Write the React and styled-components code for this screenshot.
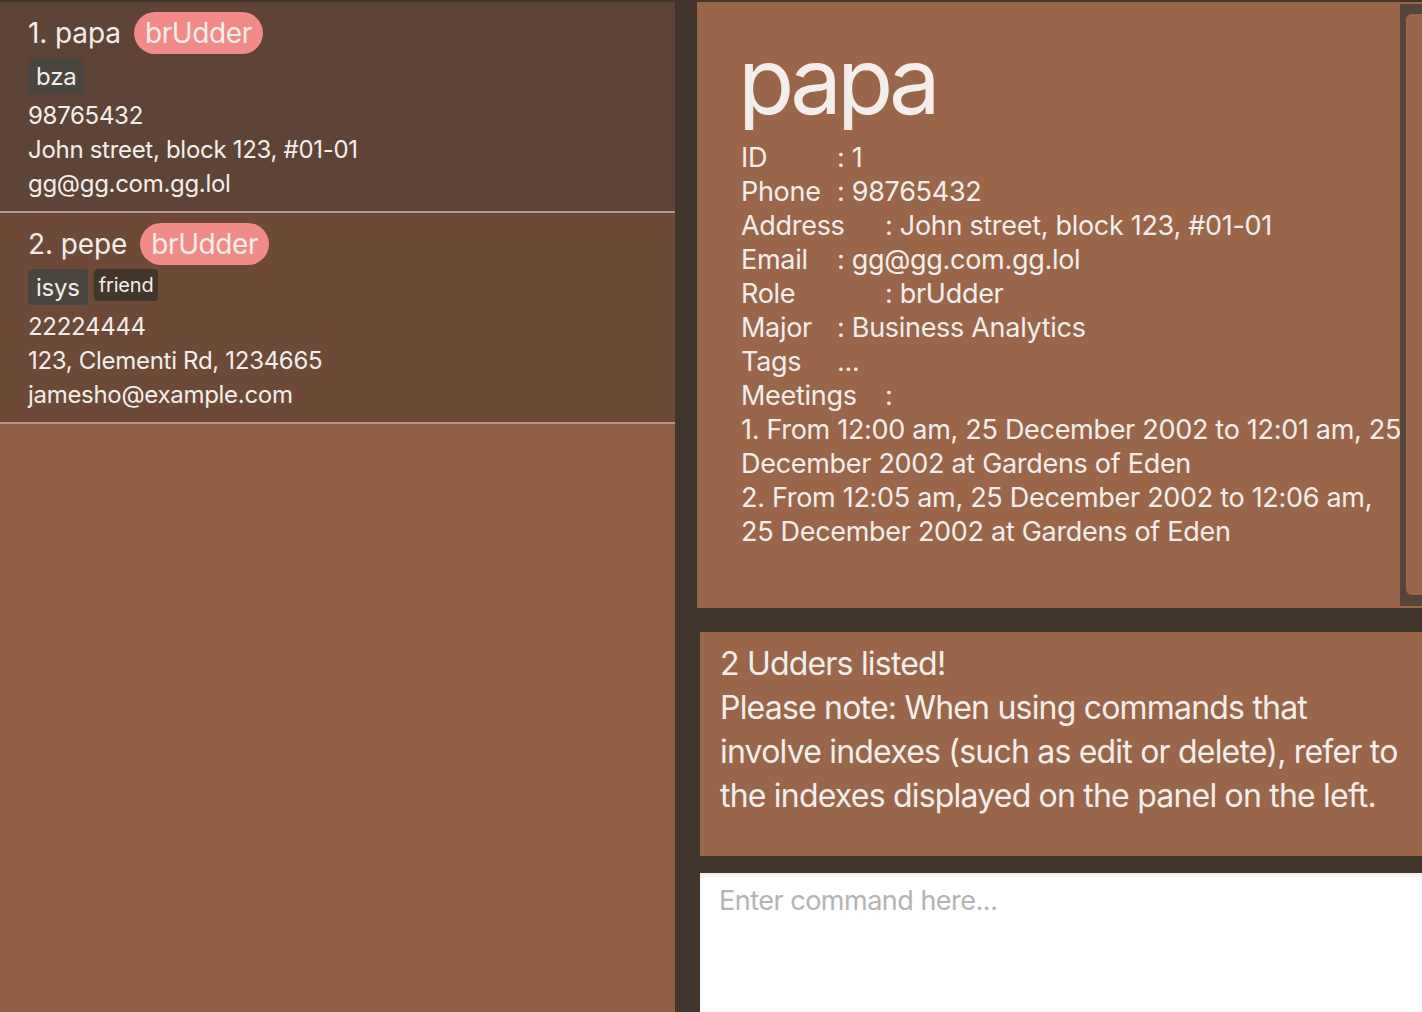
import React from 'react'
import styled, { createGlobalStyle } from 'styled-components'

const Global = createGlobalStyle`
html, body {
  margin: 0;
  padding: 0;
  background: #42352c;
}
* { box-sizing: border-box; }
`

const Shell = styled.div`
width: 1422px;
height: 1012px;
overflow: hidden;
display: grid;
grid-template-columns: 675px 1fr;
column-gap: 22px;
padding-top: 2px;
background-color: #42352c;
font-family: Inter, "Open Sans", sans-serif;
color: #f4eeea;
`

const ListPanel = styled.div`
background-color: #8f5f43;
display: flex;
flex-direction: column;
`

const Card = styled.div`
background-color: ${p => p.$bg};
height: 211px;
border-bottom: 2px solid #b29a89;
padding: 10px 28px 0;
`

const TitleRow = styled.div`
display: flex;
align-items: center;
gap: 13px;
height: 42px;
font-size: 28px;
letter-spacing: -0.1px;
`

const RolePill = styled.span`
background-color: #f08b88;
border-radius: 21px;
height: 42px;
padding: 0 11px;
display: flex;
align-items: center;
font-size: 28px;
letter-spacing: -0.4px;
`

const TagRow = styled.div`
display: flex;
gap: 6px;
margin-top: 4px;
height: 36px;
`

const Tag = styled.span`
background-color: ${p => (p.$dark ? '#42352c' : '#4b4540')};
border-radius: 4px;
font-size: ${p => (p.$small ? '20px' : '24px')};
letter-spacing: -0.2px;
height: ${p => (p.$small ? '32px' : '36px')};
padding: 0 ${p => (p.$small ? '5px' : '8px')};
display: flex;
align-items: center;
`

const Line = styled.div`
font-size: 24px;
line-height: 34px;
letter-spacing: -0.3px;
white-space: nowrap;
`

const Lines = styled.div`
margin-top: 5px;
`

const RightCol = styled.div`
display: flex;
flex-direction: column;
min-width: 0;
`

const Detail = styled.div`
height: 606px;
background-color: #99664a;
display: flex;
overflow: hidden;
`

const DetailBody = styled.div`
flex: 1;
min-width: 0;
padding: 0 0 0 44px;
`

const BigName = styled.div`
font-size: 92px;
line-height: 80px;
height: 89px;
margin-top: 39px;
margin-left: -3px;
overflow: hidden;
letter-spacing: -5px;
`

const InfoList = styled.div`
margin-top: 11px;
font-size: 27px;
line-height: 34px;
letter-spacing: -0.3px;
white-space: nowrap;
`

const Label = styled.span`
display: inline-block;
width: ${p => p.$w}px;
`

const ScrollTrack = styled.div`
width: 22px;
flex-shrink: 0;
margin: 2px 0 2px;
padding: 10px 0 11px 6px;
background-color: #54443a;
display: flex;
`

const ScrollInner = styled.div`
flex: 1;
background-color: #99664a;
border-radius: 6px 0 0 6px;
`

const ResultBox = styled.div`
margin: 24px 0 0 3px;
height: 224px;
background-color: #99664a;
padding: 10px 20px;
font-size: 32px;
line-height: 44px;
letter-spacing: -0.8px;
white-space: nowrap;
`

const CommandBox = styled.div`
margin: 17px 0 0 3px;
flex: 1;
background: #ffffff;
box-shadow: inset 0 3px 4px rgba(0, 0, 0, 0.08);
padding: 10px 19px;
font-size: 27px;
line-height: 36px;
letter-spacing: -0.5px;
color: #b4b4b4;
`

const people = [
  {
    name: '1. papa',
    bg: '#5d4437',
    tags: [{ text: 'bza' }],
    phone: '98765432',
    address: 'John street, block 123, #01-01',
    email: 'gg@gg.com.gg.lol',
  },
  {
    name: '2. pepe',
    bg: '#6c4a37',
    tags: [{ text: 'isys' }, { text: 'friend', small: true, dark: true }],
    phone: '22224444',
    address: '123, Clementi Rd, 1234665',
    email: 'jamesho@example.com',
  },
]

const info = [
  ['ID', 96, ': 1'],
  ['Phone', 96, ': 98765432'],
  ['Address', 144, ': John street, block 123, #01-01'],
  ['Email', 96, ': gg@gg.com.gg.lol'],
  ['Role', 144, ': brUdder'],
  ['Major', 96, ': Business Analytics'],
  ['Tags', 96, '...'],
  ['Meetings', 144, ':'],
]

const App = () => {
  return (
    <>
      <Global />
      <Shell>
        <ListPanel>
          {people.map(p => (
            <Card key={p.name} $bg={p.bg}>
              <TitleRow>
                <span>{p.name}</span>
                <RolePill>brUdder</RolePill>
              </TitleRow>
              <TagRow>
                {p.tags.map(t => (
                  <Tag key={t.text} $small={t.small} $dark={t.dark}>{t.text}</Tag>
                ))}
              </TagRow>
              <Lines>
                <Line>{p.phone}</Line>
                <Line>{p.address}</Line>
                <Line>{p.email}</Line>
              </Lines>
            </Card>
          ))}
        </ListPanel>

        <RightCol>
          <Detail>
            <DetailBody>
              <BigName>papa</BigName>
              <InfoList>
                {info.map(([k, w, v]) => (
                  <div key={k}><Label $w={w}>{k}</Label>{v}</div>
                ))}
                <div>1. From 12:00 am, 25 December 2002 to 12:01 am, 25</div>
                <div>December 2002 at Gardens of Eden</div>
                <div>2. From 12:05 am, 25 December 2002 to 12:06 am,</div>
                <div>25 December 2002 at Gardens of Eden</div>
              </InfoList>
            </DetailBody>
            <ScrollTrack>
              <ScrollInner />
            </ScrollTrack>
          </Detail>
          <ResultBox>
            2 Udders listed!<br />
            Please note: When using commands that<br />
            involve indexes (such as edit or delete), refer to<br />
            the indexes displayed on the panel on the left.
          </ResultBox>
          <CommandBox>Enter command here...</CommandBox>
        </RightCol>
      </Shell>
    </>
  )
}

export default App
